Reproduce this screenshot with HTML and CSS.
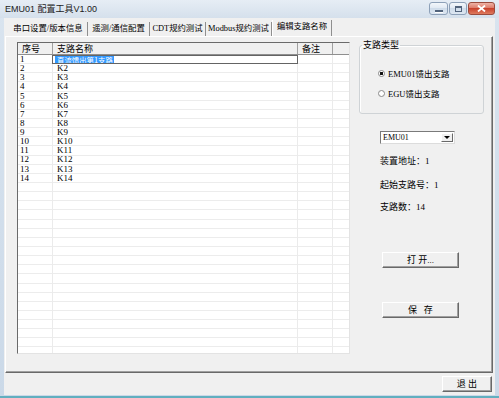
FILE: index.html
```html
<!DOCTYPE html>
<html lang="zh-CN">
<head>
  <meta charset="UTF-8">
  <title>EMU01 配置工具V1.00</title>
  <link rel="stylesheet" href="styles.css">
</head>
<body>
  <div class="window">
    <div class="titlebar">
      <span class="title">EMU01 配置工具V1.00</span>
      <div class="caption">
        <span class="cap cap-min"><i></i></span>
        <span class="cap cap-max"><i></i></span>
        <span class="cap cap-close">
          <svg width="9" height="7" viewBox="0 0 9 7"><path d="M1 0.5L8 6.5M8 0.5L1 6.5" stroke="#fff" stroke-width="1.8"/></svg>
        </span>
      </div>
    </div>

    <div class="client">
      <div class="tabs">
        <span class="tab tab-1">串口设置/版本信息</span>
        <span class="tab tab-2">遥测/通信配置</span>
        <span class="tab tab-3">CDT规约测试</span>
        <span class="tab tab-4">Modbus规约测试</span>
        <span class="tab tab-5 tab-on">编辑支路名称</span>
      </div>

      <div class="panel">
        <div class="grid">
          <div class="grid-head">
            <span>序号</span><span>支路名称</span><span>备注</span><span></span>
          </div>
          <div class="grid-body">
            <div class="row"><span>1</span><span><span class="edit"><span class="sel">直流馈出第1支路</span></span></span></div>
            <div class="row"><span>2</span><span>K2</span></div>
            <div class="row"><span>3</span><span>K3</span></div>
            <div class="row"><span>4</span><span>K4</span></div>
            <div class="row"><span>5</span><span>K5</span></div>
            <div class="row"><span>6</span><span>K6</span></div>
            <div class="row"><span>7</span><span>K7</span></div>
            <div class="row"><span>8</span><span>K8</span></div>
            <div class="row"><span>9</span><span>K9</span></div>
            <div class="row"><span>10</span><span>K10</span></div>
            <div class="row"><span>11</span><span>K11</span></div>
            <div class="row"><span>12</span><span>K12</span></div>
            <div class="row"><span>13</span><span>K13</span></div>
            <div class="row"><span>14</span><span>K14</span></div>
          </div>
        </div>

        <div class="side">
          <fieldset class="group">
            <legend>支路类型</legend>
            <label class="radio radio-1"><span class="dot on"></span>EMU01馈出支路</label>
            <label class="radio radio-2"><span class="dot"></span>EGU馈出支路</label>
          </fieldset>

          <div class="combo">
            <span class="combo-text">EMU01</span>
            <span class="drop"><i></i></span>
          </div>

          <div class="info info-1">装置地址：1</div>
          <div class="info info-2">起始支路号：1</div>
          <div class="info info-3">支路数：14</div>

          <button class="btn btn-open">打 开...</button>
          <button class="btn btn-save">保&nbsp;&nbsp;&nbsp;存</button>
        </div>
      </div>

      <div class="footer">
        <button class="btn btn-exit">退 出</button>
      </div>
    </div>
  </div>
</body>
</html>
```

FILE: styles.css
```css
*{margin:0;padding:0;box-sizing:border-box;}
body{width:499px;height:398px;overflow:hidden;background:#cfdcea;font-family:"Liberation Serif","Noto Sans CJK SC",serif;font-size:9px;color:#000;}

/* window frame */
.window{display:flex;flex-direction:column;width:499px;height:398px;background:linear-gradient(#d9e4ef,#cbd9e8);box-shadow:inset 0 -2px #62afbf;}
.titlebar{display:flex;align-items:flex-start;height:18px;background:linear-gradient(#e6edf5,#d5e0ec);}
.title{padding-left:5px;font:9px/18px "Liberation Sans","Noto Sans CJK SC",sans-serif;color:#1b1b1b;}
.caption{display:flex;gap:1px;margin:2px 4px 0 auto;}
.cap{display:flex;justify-content:center;align-items:center;height:13px;border:1px solid #8da0b8;border-radius:3px;background:linear-gradient(#f3f7fb,#dfe8f2 50%,#cfdcea 50%,#dde7f2);}
.cap-min{width:19px;}
.cap-min i{width:8px;height:2px;margin-top:5px;background:#52647c;box-shadow:0 1px #fff;}
.cap-max{width:18px;}
.cap-max i{width:7px;height:6px;border:1px solid #52647c;border-top-width:2px;}
.cap-close{width:27px;border-color:#9a4b3d;background:linear-gradient(#eeb2a5,#dc7563 50%,#c9432d 50%,#de7b5f);}

.client{display:flex;flex-direction:column;flex:1;margin:0 4px 3px;background:#f0f0f0;}

/* tabs */
.tabs{display:flex;align-items:flex-end;height:18px;padding-left:5px;}
.tab{height:14px;border-right:1px solid #8f8f8f;font-size:8.4px;line-height:14px;text-align:center;white-space:nowrap;}
.tab-1{width:79px;}
.tab-2{width:62px;}
.tab-3{width:56px;}
.tab-4{width:66px;}
.tab-5{width:60px;}
.tab-on{height:16px;line-height:13px;border-left:1px solid #fff;}

.panel{display:flex;align-items:flex-start;width:488px;height:337px;margin-left:1px;padding:5px 0 0 11px;border:1px solid;border-color:#fff #696969 #696969 #fff;box-shadow:inset -1px -1px #a0a0a0;}

/* list */
.grid{display:flex;flex-direction:column;width:333px;height:312px;border:1px solid;border-color:#6a6a6a #e3e3e3 #e3e3e3 #6a6a6a;background:#fff;}
.grid-head{display:grid;grid-template-columns:35px 245px 35px 1fr;height:12px;border-bottom:1px solid #8f8f8f;background:#f0f0f0;}
.grid-head span{padding-left:4px;border-right:1px solid #a0a0a0;font-family:"Noto Sans CJK SC",sans-serif;line-height:11px;}
.grid-head span:last-child{border-right:0;}
.grid-body{flex:1;overflow:hidden;
  background-image:
    linear-gradient(to right,transparent 34px,#ebebeb 34px,#ebebeb 35px,transparent 35px,transparent 279px,#ebebeb 279px,#ebebeb 280px,transparent 280px,transparent 314px,#ebebeb 314px,#ebebeb 315px,transparent 315px),
    repeating-linear-gradient(to bottom,transparent 0,transparent 8.14px,#ececec 8.14px,#ececec 9.14px);}
.row{display:grid;grid-template-columns:35px 245px;height:9.14px;overflow:hidden;font-size:9px;line-height:9px;}
.row span:first-child{padding-left:2px;}
.row span:nth-child(2){padding-left:4px;}
.row .edit{display:block;height:9px;margin:0 0 0 -5px;padding:0 0 0 1px;border:1px solid #646464;background:#fff;overflow:hidden;}
.row .sel{display:inline-block;height:7px;padding:0 1px;background:#3399ff;color:#fff;font:7.4px/7px "Noto Sans CJK SC",sans-serif;vertical-align:top;}

/* right side */
.side{display:flex;flex-direction:column;width:126px;margin-left:7px;}
.group{width:125px;height:73px;margin:-1px 0 0 2px;border:1px solid #cfd3d6;border-radius:3px;box-shadow:inset 1px 1px #fff;}
.group legend{margin-left:2px;padding:0 1px;line-height:8px;}
.radio{display:flex;align-items:center;gap:3px;height:10px;margin-left:18px;font-size:8.5px;}
.radio-1{margin-top:19px;}
.radio-2{margin-top:10px;}
.dot{width:7px;height:7px;border:1px solid #8a8a8a;border-radius:50%;background:#fff;}
.dot.on{background:radial-gradient(circle,#111 0,#111 1.4px,#fff 1.8px);}

.combo{display:flex;width:75px;height:13px;margin:17px 0 0 23px;padding:1px;border:1px solid;border-color:#7a7a7a #dcdcdc #dcdcdc #7a7a7a;background:#fff;}
.combo-text{padding-left:1px;font-size:8px;line-height:9px;}
.drop{display:flex;justify-content:center;align-items:center;width:12px;margin-left:auto;border:1px solid;border-color:#fff #696969 #696969 #fff;background:#f0f0f0;}
.drop i{border:3px solid transparent;border-top:3px solid #000;border-bottom:0;}

.info{height:10px;margin-left:23px;line-height:10px;}
.info-1{margin-top:12px;}
.info-2{margin-top:14px;}
.info-3{margin-top:12px;}

.btn{height:16px;border:1px solid;border-color:#fff #696969 #696969 #fff;box-shadow:inset -1px -1px #a0a0a0;background:#f0f0f0;font:9px/13px "Liberation Serif","Noto Sans CJK SC",serif;color:#000;}
.btn-open,.btn-save{width:77px;margin-left:25px;}
.btn-open{margin-top:40px;}
.btn-save{margin-top:34px;}

.footer{display:flex;justify-content:flex-end;padding:3px 3px 0 0;}
.btn-exit{width:50px;}
```
